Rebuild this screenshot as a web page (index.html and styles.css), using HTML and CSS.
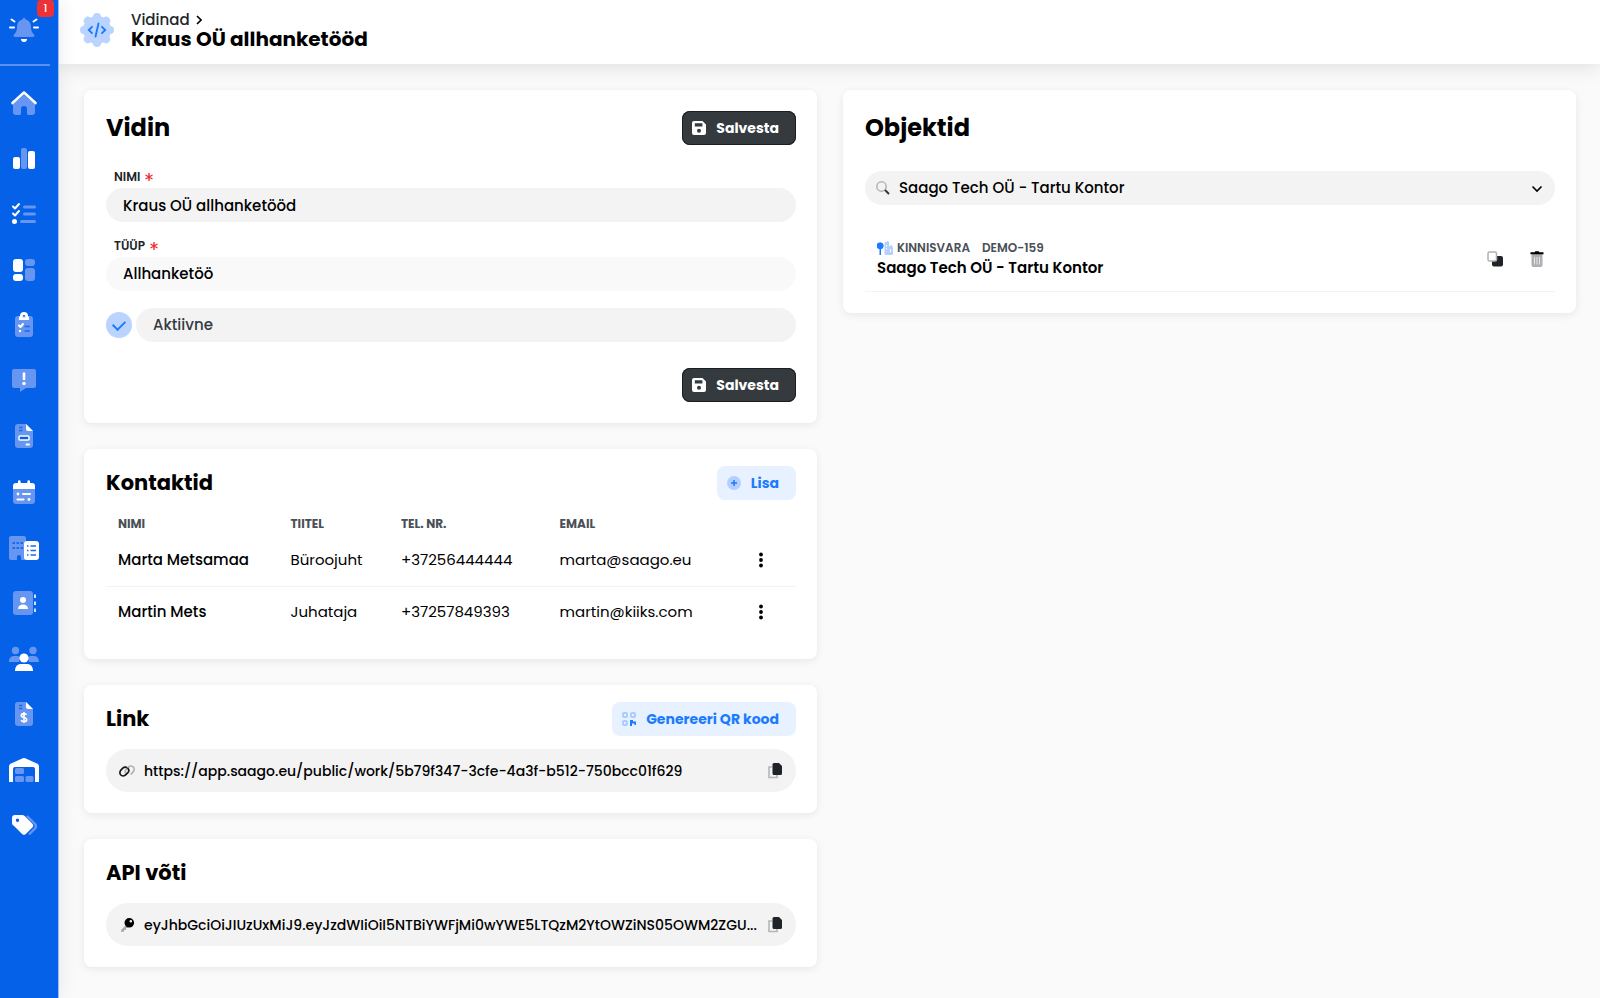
FILE: index.html
```html
<!DOCTYPE html>
<html lang="et">
<head>
<meta charset="utf-8">
<meta name="viewport" content="width=device-width, initial-scale=1">
<title>Kraus OÜ allhanketööd</title>
<link rel="stylesheet" href="styles.css">
</head>
<body>
<svg class="sprite" aria-hidden="true">
  <symbol id="save" viewBox="0 0 14 14"><path fill="currentColor" fill-rule="evenodd" d="M2 0h8.5L14 3.5V12a2 2 0 0 1-2 2H2a2 2 0 0 1-2-2V2a2 2 0 0 1 2-2zm.8 2.2v3.3h7.6V2.2zM7 7.8a2 2 0 1 0 0 4 2 2 0 0 0 0-4z"/></symbol>
  <symbol id="asterisk" viewBox="0 0 8 8"><path d="M4 0v8M.5 2l7 4M7.500 2l-7 4" stroke="currentColor" stroke-width="1.400" fill="none"/></symbol>
  <symbol id="dots" viewBox="0 0 4 16"><g fill="currentColor"><circle cx="2" cy="2.500" r="1.900"/><circle cx="2" cy="8" r="1.900"/><circle cx="2" cy="13.500" r="1.900"/></g></symbol>
  <symbol id="copy" viewBox="0 0 14 16"><path d="M4 4H1v10.500h8V12" fill="none" stroke="#b5b6b8" stroke-width="1.600"/><path d="M6 0h5l3 3v7.500a1.500 1.500 0 0 1-1.500 1.500H6a1.500 1.500 0 0 1-1.500-1.500v-9A1.500 1.500 0 0 1 6 0z" fill="#202327"/></symbol>
</svg>
<div class="app">
  <aside class="sidebar">
    <button class="bell" aria-label="Teavitused">
      <svg class="nav-icon" viewBox="0 0 36 36"><path class="soft" d="M18 7c1 0 1.500.7 1.500 1.600 3.600.8 5.500 3.400 5.500 7.400 0 4 1 5.500 3 7.600.9 1 .4 2.400-1 2.400H9c-1.400 0-1.900-1.400-1-2.400 2-2.100 3-3.600 3-7.600 0-4 1.900-6.600 5.500-7.400C16.500 7.700 17 7 18 7z"/><path class="solid" d="M15 28h6a3 3 0 0 1-6 0z"/><path class="line" d="M5.500 8.500l3 2M30.500 8.500l-3 2M4 16.500h4M28 16.500h4"/></svg>
      <span class="badge">1</span>
    </button>
    <nav class="nav" aria-label="Peamenüü">
      <a href="#" aria-label="Avaleht"><svg class="nav-icon" viewBox="0 0 36 36"><path class="soft" d="M18 10l11 9v8a3 3 0 0 1-3 3h-3.500a1.500 1.500 0 0 1-1.500-1.500V24a3 3 0 0 0-6 0v4.500a1.500 1.500 0 0 1-1.500 1.500H10a3 3 0 0 1-3-3v-8z"/><path class="line wide" d="M6.500 18L18 7.500 29.500 18"/></svg></a>
      <a href="#" aria-label="Statistika"><svg class="nav-icon" viewBox="0 0 36 36"><rect class="solid" x="7" y="17" width="7" height="12" rx="2"/><rect class="soft" x="15" y="8" width="6" height="21" rx="2"/><rect class="solid" x="22" y="11" width="7" height="18" rx="2"/></svg></a>
      <a href="#" aria-label="Ülesanded"><svg class="nav-icon" viewBox="0 0 36 36"><path class="softline" d="M18.500 11h10M18.500 18h10M15.500 25.500h13"/><path class="line" d="M7 10.500l2 2L13 8M7 17.500l2 2 4-4.500"/><circle class="solid" cx="8.500" cy="25.500" r="2.500"/></svg></a>
      <a href="#" aria-label="Töölaud"><svg class="nav-icon" viewBox="0 0 36 36"><rect class="solid" x="7" y="7" width="10" height="13" rx="3"/><rect class="solid" x="7" y="22" width="10" height="7" rx="3"/><rect class="soft" x="19" y="7" width="10" height="7" rx="3"/><rect class="soft" x="19" y="16" width="10" height="13" rx="3"/></svg></a>
      <a href="#" aria-label="Kontroll-lehed"><svg class="nav-icon" viewBox="0 0 36 36"><rect class="soft" x="9" y="9" width="18" height="21" rx="3"/><path class="solid" fill-rule="evenodd" d="M14 9a4 4 0 0 1 8 0l1 1v3H13v-3zm4-1a1.300 1.300 0 1 0 0 2.600A1.300 1.300 0 0 0 18 8z"/><path class="line" d="M13 18.500l1.500 1.500 2.500-3"/><path class="cut" d="M18.500 19.500H24M18.500 24H24"/><circle class="solid" cx="14" cy="24" r="1.200"/></svg></a>
      <a href="#" aria-label="Teated"><svg class="nav-icon" viewBox="0 0 36 36"><path class="soft" d="M8 6h20a2 2 0 0 1 2 2v15a2 2 0 0 1-2 2h-8l-6 4v-4H8a2 2 0 0 1-2-2V8a2 2 0 0 1 2-2z"/><path class="line wide" d="M18 10.500v5.500"/><circle class="solid" cx="18" cy="20.500" r="1.700"/></svg></a>
      <a href="#" aria-label="Dokumendid"><svg class="nav-icon" viewBox="0 0 36 36"><path class="soft" d="M12 6h8l7 7v14a3 3 0 0 1-3 3H12a3 3 0 0 1-3-3V9a3 3 0 0 1 3-3z"/><path class="solid" d="M20 6l7 7h-5a2 2 0 0 1-2-2z"/><path class="cut" d="M13 9.500h3.500M13 12.500h3.500"/><rect class="box" x="13" y="18" width="10" height="4" rx="1"/><path class="line" d="M20.500 26.500H23"/></svg></a>
      <a href="#" aria-label="Kalender"><svg class="nav-icon" viewBox="0 0 36 36"><path class="soft" d="M7 15h22v12a3 3 0 0 1-3 3H10a3 3 0 0 1-3-3z"/><path class="solid" d="M10 9h2V7.500a1.300 1.300 0 0 1 2.600 0V9h6.800V7.500a1.300 1.300 0 0 1 2.600 0V9h2a3 3 0 0 1 3 3v3H7v-3a3 3 0 0 1 3-3z"/><path class="line" d="M17 20h7M11.500 25.500h6"/><circle class="solid" cx="12" cy="20" r="1.400"/><circle class="solid" cx="23" cy="25.500" r="1.400"/></svg></a>
      <a href="#" aria-label="Objektid"><svg class="nav-icon" viewBox="0 0 36 36"><path class="soft" d="M5 6h13a2 2 0 0 1 2 2v22h-5v-3a2 2 0 0 0-4 0v3H5a2 2 0 0 1-2-2V8a2 2 0 0 1 2-2z"/><path class="cut dash" d="M6.500 13H17M6.500 18H17"/><rect class="solid" x="18" y="11" width="15" height="19" rx="3"/><path class="cut" d="M21 16h1.500M24.500 16H30M21 20.500h1.500M24.500 20.500H30M21 25h1.500M24.500 25H30"/></svg></a>
      <a href="#" aria-label="Kontaktid"><svg class="nav-icon" viewBox="0 0 36 36"><rect class="soft" x="7" y="6" width="20" height="24" rx="3"/><circle class="solid" cx="17" cy="15" r="3"/><path class="solid" d="M12 24c0-3 2-4.500 5-4.500s5 1.500 5 4.500z"/><path class="line thin" d="M29 9.500V13M29 16.500V20M29 23.500V27"/></svg></a>
      <a href="#" aria-label="Kasutajad"><svg class="nav-icon" viewBox="0 0 36 36"><g class="soft"><circle cx="9.500" cy="9.500" r="3.700"/><circle cx="27" cy="9.500" r="3.700"/><path d="M3 21c0-4 2-6 5-6h3c1.500 0 2 .5 3 1.500L13 21zM33 21c0-4-2-6-5-6h-3c-1.500 0-2 .5-3 1.500l1 4.500z"/></g><circle class="solid" cx="18" cy="17" r="4.600"/><path class="solid" d="M9 30c0-4.500 2.500-7 6-7h6c3.500 0 6 2.500 6 7z"/></svg></a>
      <a href="#" aria-label="Arved"><svg class="nav-icon" viewBox="0 0 36 36"><path class="soft" d="M12 6h8l7 7v14a3 3 0 0 1-3 3H12a3 3 0 0 1-3-3V9a3 3 0 0 1 3-3z"/><path class="solid" d="M20 6l7 7h-5a2 2 0 0 1-2-2z"/><path class="cut" d="M13 9.500h3.500M13 12.500h3.500"/><path class="line thin" d="M20.500 19c-.5-1-1.500-1.400-2.700-1.400-1.500 0-2.500.7-2.500 1.900 0 2.800 5.400 1.400 5.400 4.200 0 1.200-1.100 1.900-2.700 1.900-1.300 0-2.400-.5-2.900-1.500M18 16v11"/></svg></a>
      <a href="#" aria-label="Ladu"><svg class="nav-icon" viewBox="0 0 36 36"><path class="solid" d="M3 30V14.500c0-1.300.8-2.400 2-2.900l11.800-5.300a3 3 0 0 1 2.400 0L31 11.600c1.200.5 2 1.600 2 2.900V30h-4V17a2 2 0 0 0-2-2H9a2 2 0 0 0-2 2v13z"/><g class="soft"><rect x="9" y="16" width="9" height="6" rx="1.500"/><rect x="9" y="24" width="9" height="6" rx="1.500"/><rect x="19.500" y="24" width="8" height="6" rx="1.500"/></g></svg></a>
      <a href="#" aria-label="Sildid"><svg class="nav-icon" viewBox="0 0 36 36"><path d="M21 8l8 8a3.500 3.500 0 0 1 0 4.500l-6 6" fill="none" stroke="#6696f1" stroke-width="2.400"/><path class="solid" fill-rule="evenodd" d="M9 7h7c1 0 2 .4 2.700 1.100l7.400 7.400a3 3 0 0 1 0 4.300l-6 6a3 3 0 0 1-4.300 0l-7.700-7.700A4 4 0 0 1 6 15.500V10a3 3 0 0 1 3-3zm2.500 3.500a1.700 1.700 0 1 0 0 3.400 1.700 1.700 0 0 0 0-3.400z"/></svg></a>
    </nav>
  </aside>

  <div class="page">
    <header class="topbar">
      <svg class="logo" viewBox="0 0 34 34"><g fill="#bad3ff"><circle cx="17" cy="17" r="14"/><rect x="13" width="8" height="34" rx="4"/><rect x="13" width="8" height="34" rx="4" transform="rotate(45 17 17)"/><rect x="13" width="8" height="34" rx="4" transform="rotate(90 17 17)"/><rect x="13" width="8" height="34" rx="4" transform="rotate(135 17 17)"/></g><path d="M12 13.800L8.800 17l3.200 3.200M22 13.800l3.200 3.200-3.200 3.200M18.500 10.500l-3 13" fill="none" stroke="#1a7bff" stroke-width="1.900" stroke-linecap="round"/></svg>
      <div class="heading">
        <a class="crumb" href="#">Vidinad <svg class="crumb-arrow" viewBox="0 0 6 10"><path d="M1 1l4 4-4 4" fill="none" stroke="currentColor" stroke-width="1.600"/></svg></a>
        <h1>Kraus OÜ allhanketööd</h1>
      </div>
    </header>

    <main class="content">
      <div class="column">
        <form class="card card-form">
          <div class="card-head">
            <h2 class="big">Vidin</h2>
            <button class="btn dark" type="button"><svg class="icon-14"><use href="#save"/></svg>Salvesta</button>
          </div>
          <div class="field">
            <label for="name">NIMI <svg class="asterisk"><use href="#asterisk"/></svg></label>
            <input class="control" id="name" type="text" value="Kraus OÜ allhanketööd">
          </div>
          <div class="field">
            <label for="type">TÜÜP <svg class="asterisk"><use href="#asterisk"/></svg></label>
            <select class="control pale" id="type"><option>Allhanketöö</option></select>
          </div>
          <div class="check-row">
            <input class="check" id="active" type="checkbox" checked>
            <label class="check-label" for="active">Aktiivne</label>
          </div>
          <div class="form-foot">
            <button class="btn dark" type="button"><svg class="icon-14"><use href="#save"/></svg>Salvesta</button>
          </div>
        </form>

        <section class="card">
          <div class="card-head">
            <h2>Kontaktid</h2>
            <button class="btn light" type="button"><svg class="icon-14" viewBox="0 0 14 14"><circle cx="7" cy="7" r="7" fill="#b4cfff"/><path d="M7 4v6M4 7h6" stroke="#1a7bff" stroke-width="1.500"/></svg>Lisa</button>
          </div>
          <table class="contacts">
            <thead><tr><th class="c-name">NIMI</th><th class="c-title">TIITEL</th><th class="c-phone">TEL. NR.</th><th class="c-mail">EMAIL</th><th class="c-menu"></th></tr></thead>
            <tbody>
              <tr><td class="strong">Marta Metsamaa</td><td>Büroojuht</td><td>+37256444444</td><td>marta@saago.eu</td><td class="menu"><button class="plain" aria-label="Menüü"><svg class="dots"><use href="#dots"/></svg></button></td></tr>
              <tr><td class="strong">Martin Mets</td><td>Juhataja</td><td>+37257849393</td><td>martin@kiiks.com</td><td class="menu"><button class="plain" aria-label="Menüü"><svg class="dots"><use href="#dots"/></svg></button></td></tr>
            </tbody>
          </table>
        </section>

        <section class="card">
          <div class="card-head">
            <h2>Link</h2>
            <button class="btn light" type="button"><svg class="icon-14" viewBox="0 0 14 14"><g fill="none" stroke="#aecbff" stroke-width="2"><rect x="1" y="1" width="4" height="4" rx="1"/><rect x="9" y="1" width="4" height="4" rx="1"/><rect x="1" y="9" width="4" height="4" rx="1"/></g><path d="M8 14V8h3v1.500h3V13h-1.500v-1.500H10V14z" fill="#1a7bff"/></svg>Genereeri QR kood</button>
          </div>
          <div class="copy-box">
            <svg class="icon-16" viewBox="0 0 16 16"><g fill="none" stroke-width="1.700" stroke-linecap="round"><path d="M7 10.500c-1-1.200-.9-3.200.3-4.400l1.800-1.800c1.500-1.500 3.800-1.600 5.100-.3s1.200 3.600-.3 5.100L12.200 11" stroke="#b0b1b3"/><path d="M9 5.500c1 1.200.9 3.200-.3 4.400l-1.800 1.800c-1.500 1.500-3.800 1.600-5.100.3S.600 8.400 2.100 6.900L3.800 5.200c1-.9 2.300-1.200 3.500-.8" stroke="#16181b"/></g></svg>
            <a class="copy-text" href="#">https://app.saago.eu/public/work/5b79f347-3cfe-4a3f-b512-750bcc01f629</a>
            <button class="plain" aria-label="Kopeeri link"><svg class="copy"><use href="#copy"/></svg></button>
          </div>
        </section>

        <section class="card">
          <div class="card-head"><h2>API võti</h2></div>
          <div class="copy-box">
            <svg class="icon-16" viewBox="0 0 16 16"><path d="M8 7L2 13v1.800h3V13h2v-2h1.500L10 9.500z" fill="#a9aaad"/><path fill-rule="evenodd" d="M10.300 1a4.800 4.800 0 1 1 0 9.600 4.800 4.800 0 0 1 0-9.600zm1.500 2a1.300 1.300 0 1 0 0 2.600 1.300 1.300 0 0 0 0-2.600z"/></svg>
            <span class="copy-text">eyJhbGciOiJIUzUxMiJ9.eyJzdWIiOiI5NTBiYWFjMi0wYWE5LTQzM2YtOWZiNS05OWM2ZGU...</span>
            <button class="plain" aria-label="Kopeeri API võti"><svg class="copy"><use href="#copy"/></svg></button>
          </div>
        </section>
      </div>

      <div class="column">
        <section class="card card-form">
          <div class="card-head"><h2 class="big">Objektid</h2></div>
          <div class="search">
            <svg class="search-icon" viewBox="0 0 14 14"><circle cx="5.500" cy="5.500" r="4.700" fill="none" stroke="#b2b3b5" stroke-width="1.500"/><path d="M9 9l4 4" stroke="#333" stroke-width="1.900"/></svg>
            <select class="control search-select" aria-label="Objekt"><option>Saago Tech OÜ - Tartu Kontor</option></select>
            <svg class="chevron" viewBox="0 0 12 8"><path d="M1.500 1.500L6 6l4.500-4.500" fill="none" stroke="#000" stroke-width="1.600"/></svg>
          </div>
          <div class="object">
            <div class="object-info">
              <div class="object-meta"><svg class="icon-16" viewBox="0 0 16 16"><path d="M3 2.500a3 3 0 0 1 1 6V15H2.500V8.500a3 3 0 0 1 .5-6z" fill="#1a7bff"/><circle cx="3.200" cy="6" r="3.200" fill="#1a7bff"/><path fill-rule="evenodd" d="M8 2h2V1h1.500v1H12v4h1.500V5H15v1.500l1 .5v6.500A1.500 1.500 0 0 1 14.500 15H9a1.500 1.500 0 0 1-1.500-1.500v-10zm1 3v1.500h1V5zm0 3v1.500h1V8zm4 1v3h1V9z" fill="#b5d0ff"/></svg><span>KINNISVARA</span><span class="code">DEMO-159</span></div>
              <h3>Saago Tech OÜ - Tartu Kontor</h3>
            </div>
            <button class="plain" aria-label="Kopeeri"><svg class="icon-16" viewBox="0 0 16 16"><rect x="5" y="5" width="11" height="10.500" rx="2" fill="#202327"/><rect x="1" y="1" width="8.500" height="9" rx="1.500" fill="#fff" stroke="#b0b1b3" stroke-width="1.500"/></svg></button>
            <button class="plain" aria-label="Kustuta"><svg class="icon-16" viewBox="0 0 16 16"><path d="M2.500 3h11v11a2 2 0 0 1-2 2h-7a2 2 0 0 1-2-2z" fill="#aeafb2"/><path d="M5.500 6v7.500M8 6v7.500M10.500 6v7.500" stroke="#e6e6e7"/><path d="M1.500 1.300h4L6.300.2h3.400l.8 1.100h4v1.900h-13z"/></svg></button>
          </div>
        </section>
      </div>
    </main>
  </div>
</div>
</body>
</html>
```
FILE: styles.css
```css
* { box-sizing: border-box; }

body {
  margin: 0;
  background: #fafafa;
  color: #000;
  font: 500 15px/22px Poppins, Inter, "Open Sans", sans-serif;
}

h1, h2, h3 { margin: 0; }
a { color: inherit; text-decoration: none; }
button, input, select { font: inherit; color: inherit; margin: 0; border: 0; }
button { cursor: pointer; }
svg { display: block; flex: none; }
.sprite { display: none; }

.app { display: flex; min-height: 100vh; }

/* Sidebar */
.sidebar {
  flex: none;
  width: 59px;
  background: #0561e8;
  border-right: 1px solid #9dbcf6;
  box-shadow: 0 0 20px rgba(0, 0, 0, .09);
  z-index: 2;
}
.bell {
  position: relative;
  display: flex;
  align-items: center;
  width: 50px;
  height: 66px;
  padding: 0 0 6px 6px;
  background: none;
  border-bottom: 2px solid #5a91f0;
}
.badge {
  position: absolute;
  top: 0;
  right: -4px;
  width: 17px;
  height: 17px;
  border-radius: 4px;
  background: #ec3237;
  color: #fff;
  font-size: 11px;
  line-height: 16px;
}
.nav {
  display: grid;
  grid-auto-rows: 1fr;
  height: 78vh;
  margin-top: 9px;
}
.nav a { display: flex; align-items: center; padding-left: 6px; }
.nav-icon { width: 36px; height: 36px; }
.soft { fill: #6696f1; }
.solid { fill: #fff; }
.line, .softline, .cut {
  fill: none;
  stroke: #fff;
  stroke-width: 2;
  stroke-linecap: round;
  stroke-linejoin: round;
}
.softline { stroke: #6696f1; stroke-width: 3; }
.cut { stroke: #1c6aea; stroke-width: 1.500; stroke-linecap: butt; }
.dash { stroke-width: 2; stroke-dasharray: 2.500 1.500; }
.wide { stroke-width: 2.600; }
.thin { stroke-width: 1.600; stroke-linecap: butt; }
.box { fill: #0561e8; stroke: #fff; stroke-width: 1.500; }

/* Top bar */
.page { flex: 1; min-width: 0; }
.topbar {
  display: flex;
  align-items: center;
  gap: 17px;
  height: 64px;
  padding: 0 21px 5px;
  background: #fff;
  box-shadow: 0 2px 20px rgba(0, 0, 0, .12);
}
.logo { width: 34px; height: 34px; }
.crumb {
  display: flex;
  align-items: center;
  gap: 6px;
  line-height: 18px;
  color: #212529;
}
.crumb-arrow { width: 6px; height: 10px; color: #000; }
h1 { font-size: 20px; line-height: 20px; font-weight: 700; }

/* Cards */
.content {
  display: grid;
  grid-template-columns: 1fr 1fr;
  align-items: start;
  gap: 26px;
  padding: 26px 24px 31px 25px;
}
.column { display: grid; gap: 26px; min-width: 0; }
.card {
  min-width: 0;
  padding: 17px 21px 21px 22px;
  border-radius: 8px;
  background: #fff;
  box-shadow: 0 2px 8px rgba(0, 0, 0, .08);
}
.card-form { padding-top: 21px; }
.card-head {
  display: flex;
  align-items: center;
  justify-content: space-between;
  height: 34px;
}
h2 { font-size: 21px; line-height: 34px; font-weight: 700; }
.big { font-size: 24px; }

.btn {
  display: flex;
  align-items: center;
  gap: 10px;
  height: 34px;
  padding: 0 17px 0 10px;
  border-radius: 8px;
  font-size: 14px;
  font-weight: 700;
}
.dark { background: #343a3e; color: #fff; box-shadow: inset 0 0 0 1px #1b1e21; }
.light { background: #e7f1ff; color: #1a7bff; }
.plain {
  display: flex;
  align-items: center;
  justify-content: center;
  padding: 0;
  background: none;
}
.icon-14 { width: 14px; height: 14px; }
.icon-16 { width: 16px; height: 16px; }

/* Form */
.field { margin-top: 15px; }
.card-head + .field { margin-top: 23px; }
.field label {
  display: flex;
  align-items: center;
  gap: 5px;
  margin-bottom: 2px;
  padding-left: 8px;
  color: #212529;
  font-size: 12px;
  line-height: 18px;
  font-weight: 600;
}
.asterisk { width: 8px; height: 8px; color: #ec2f35; }
.control {
  display: block;
  width: 100%;
  height: 34px;
  padding: 0 17px;
  border-radius: 17px;
  background: #f3f3f3;
  appearance: none;
  outline: none;
}
.pale { background: #f9f9f9; }
.check-row {
  display: flex;
  align-items: center;
  gap: 4px;
  margin-top: 17px;
}
.check {
  display: grid;
  place-items: center;
  width: 26px;
  height: 26px;
  border-radius: 50%;
  background: #bad3ff;
  appearance: none;
}
.check:checked::after {
  content: "";
  width: 10px;
  height: 6px;
  margin-bottom: 3px;
  border: solid #1a7bff;
  border-width: 0 0 2px 2px;
  transform: rotate(-45deg);
}
.check-label {
  flex: 1;
  padding: 6px 17px;
  border-radius: 17px;
  background: #f3f3f3;
  color: #343a40;
}
.form-foot { display: flex; justify-content: flex-end; margin-top: 26px; }

/* Contacts */
.contacts {
  width: 100%;
  margin-top: 13px;
  border-collapse: collapse;
  table-layout: fixed;
}
.contacts th, .contacts td { padding: 0 0 0 12px; text-align: left; }
.contacts th { height: 21px; font-size: 12px; line-height: 20px; font-weight: 700; color: #495057; }
.contacts td { height: 52px; font-weight: 400; }
.contacts tr + tr td { border-top: 1px solid #f3f3f3; }
.contacts .strong { font-weight: 500; }
.contacts .menu { padding: 0; }
.menu .plain { width: 100%; height: 34px; }
.c-name { width: 25%; }
.c-title { width: 16%; }
.c-phone { width: 23%; }
.c-mail { width: 26%; }
.c-menu { width: 10%; }
.dots { width: 4px; height: 16px; }

/* Copy boxes */
.copy-box {
  display: flex;
  align-items: center;
  gap: 9px;
  height: 43px;
  margin-top: 13px;
  padding: 0 14px 0 13px;
  border-radius: 22px;
  background: #f3f3f3;
}
.copy-text {
  flex: 1;
  min-width: 0;
  overflow: hidden;
  font-size: 14px;
  white-space: nowrap;
  text-overflow: ellipsis;
}
.copy { width: 14px; height: 16px; }

/* Objects */
.search { position: relative; margin-top: 26px; }
.search-select { padding-left: 34px; }
.search-icon { position: absolute; left: 11px; top: 10px; width: 14px; height: 14px; }
.chevron { position: absolute; right: 12px; top: 14px; width: 12px; height: 8px; }
.object {
  display: flex;
  align-items: center;
  gap: 26px;
  margin-top: 26px;
  padding: 8px 10px 12px 12px;
  border-bottom: 1px solid #f3f3f3;
}
.object-info { flex: 1; min-width: 0; }
.object-meta {
  display: flex;
  align-items: center;
  gap: 4px;
  color: #495057;
  font-size: 12px;
  line-height: 18px;
  font-weight: 600;
}
.code { margin-left: 8px; }
h3 { font-size: 15px; line-height: 22px; font-weight: 600; }
```
